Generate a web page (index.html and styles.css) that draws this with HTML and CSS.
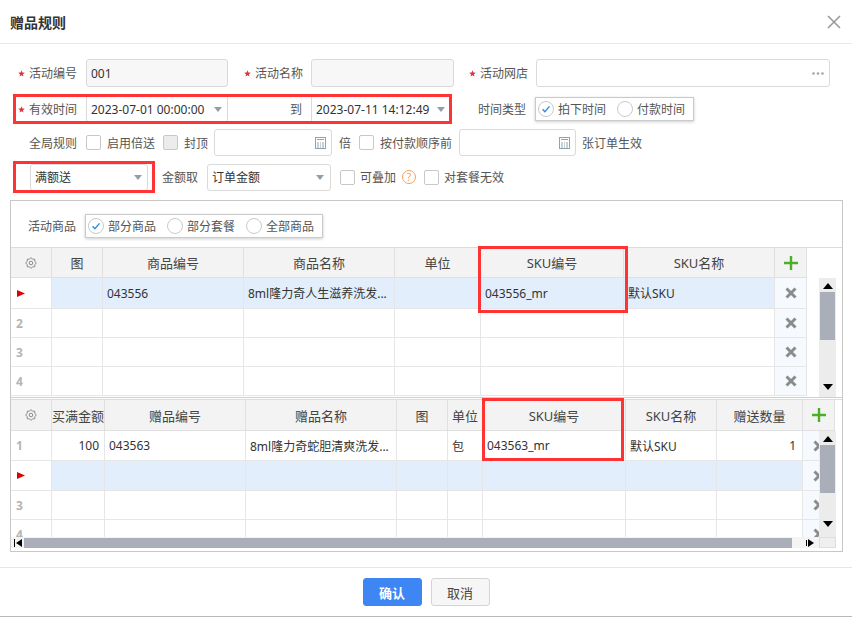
FILE: index.html
```html
<!DOCTYPE html>
<html>
<head>
  <meta charset="utf-8">
  <title>赠品规则</title>
  <link rel="stylesheet" href="styles.css">
</head>
<body>
  <div class="dialog">

    <!-- Header -->
    <div class="dlg-head">
      <span class="dlg-title">赠品规则</span>
      <svg class="dlg-close" width="14" height="14" viewBox="0 0 14 14"><path d="M1 1l12 12M13 1L1 13" stroke="#9a9a9a" stroke-width="1.6"/></svg>
    </div>

    <!-- Form -->
    <div class="form">
      <div class="row row1">
        <label class="lbl w86"><svg class="req" viewBox="0 0 10 10"><path d="M5 .3L6.23 3.6 9.76 3.75 7 5.950 7.94 9.35 5 7.4 2.06 9.35 3 5.95 .24 3.75 3.77 3.6z"/></svg>活动编号</label>
        <div class="ipt dis w142">001</div>
        <label class="lbl w83"><svg class="req" viewBox="0 0 10 10"><path d="M5 .3L6.23 3.6 9.76 3.75 7 5.95 7.94 9.35 5 7.4 2.06 9.35 3 5.95 .24 3.75 3.77 3.6z"/></svg>活动名称</label>
        <div class="ipt dis w143"></div>
        <label class="lbl w82"><svg class="req" viewBox="0 0 10 10"><path d="M5 .3L6.23 3.6 9.76 3.75 7 5.95 7.94 9.35 5 7.4 2.06 9.35 3 5.95 .24 3.75 3.77 3.6z"/></svg>活动网店</label>
        <div class="ipt w294 end">
          <svg width="12" height="3" viewBox="0 0 12 3"><circle cx="1.5" cy="1.5" r="1.3"/><circle cx="6" cy="1.5" r="1.3"/><circle cx="10.5" cy="1.5" r="1.3"/></svg>
        </div>
      </div>

      <div class="row row2">
        <div class="mark">
          <label class="lbl w72"><svg class="req" viewBox="0 0 10 10"><path d="M5 .3L6.23 3.6 9.76 3.75 7 5.95 7.94 9.35 5 7.4 2.06 9.35 3 5.95 .24 3.75 3.77 3.6z"/></svg>有效时间</label>
          <div class="ipt date w142">2023-07-01 00:00:00<span class="tri"></span></div>
          <label class="lbl w83 to">到</label>
          <div class="ipt date w140">2023-07-11 14:12:49<span class="tri"></span></div>
        </div>
        <label class="lbl w84">时间类型</label>
        <div class="radios">
          <span class="ritem"><svg class="radio" viewBox="0 0 16 16"><circle cx="8" cy="8" r="7.5" fill="#fff" stroke="#c9c9c9"/><path d="M4.6 8.3l2.3 2.5 4.6-5.4" fill="none" stroke="#2a8de8" stroke-width="1.4"/></svg>拍下时间</span>
          <span class="ritem"><svg class="radio" viewBox="0 0 16 16"><circle cx="8" cy="8" r="7.5" fill="#fff" stroke="#c9c9c9"/></svg>付款时间</span>
        </div>
      </div>

      <div class="row row3">
        <label class="lbl w86">全局规则</label>
        <span class="cb"></span>
        <span class="txt ml6">启用倍送</span>
        <span class="cb off ml8"></span>
        <span class="txt ml6">封顶</span>
        <div class="ipt w118 ml6 end">
          <svg class="calc" width="11" height="12" viewBox="0 0 11 12"><rect x=".5" y=".5" width="10" height="11" fill="none"/><path d="M2 2.5h7M2 6h2M5 6h1M7 6h2M2 8h2M5 8h1M7 8h2M2 10h2M5 10h1M7 10h2"/></svg>
        </div>
        <span class="txt ml7">倍</span>
        <span class="cb ml8"></span>
        <span class="txt ml6">按付款顺序前</span>
        <div class="ipt w117 ml7 end">
          <svg class="calc" width="11" height="12" viewBox="0 0 11 12"><rect x=".5" y=".5" width="10" height="11" fill="none"/><path d="M2 2.5h7M2 6h2M5 6h1M7 6h2M2 8h2M5 8h1M7 8h2M2 10h2M5 10h1M7 10h2"/></svg>
        </div>
        <span class="txt ml6">张订单生效</span>
      </div>

      <div class="row row4">
        <div class="mark">
          <div class="ipt sel-box w118">满额送<span class="tri"></span></div>
        </div>
        <span class="txt ml8">金额取</span>
        <div class="ipt sel-box w124 ml9">订单金额<span class="tri"></span></div>
        <span class="cb ml9"></span>
        <span class="txt ml5">可叠加</span>
        <span class="help ml6">?</span>
        <span class="cb ml8"></span>
        <span class="txt ml5">对套餐无效</span>
      </div>
    </div>

    <!-- Goods panel -->
    <div class="panel">
      <div class="goods-bar">
        <span class="txt">活动商品</span>
        <div class="radios ml9">
          <span class="ritem"><svg class="radio" viewBox="0 0 16 16"><circle cx="8" cy="8" r="7.5" fill="#fff" stroke="#c9c9c9"/><path d="M4.6 8.3l2.3 2.5 4.6-5.4" fill="none" stroke="#2a8de8" stroke-width="1.4"/></svg>部分商品</span>
          <span class="ritem"><svg class="radio" viewBox="0 0 16 16"><circle cx="8" cy="8" r="7.5" fill="#fff" stroke="#c9c9c9"/></svg>部分套餐</span>
          <span class="ritem"><svg class="radio" viewBox="0 0 16 16"><circle cx="8" cy="8" r="7.5" fill="#fff" stroke="#c9c9c9"/></svg>全部商品</span>
        </div>
      </div>

      <!-- Grid 1 -->
      <div class="grid1">
        <table class="tbl t1">
          <colgroup><col><col><col><col><col><col><col><col></colgroup>
          <thead>
            <tr>
              <th><svg class="gear" width="12" height="12" viewBox="0 0 12 12"><path d="M11.3 6L9.88 7.61 9.75 9.75 7.61 9.88 6 11.3 4.39 9.88 2.25 9.75 2.12 7.61.7 6 2.12 4.39 2.25 2.25 4.39 2.12 6 .7 7.61 2.12 9.75 2.25 9.88 4.39z"/><circle cx="6" cy="6" r="1.8"/></svg></th>
              <th>图</th>
              <th>商品编号</th>
              <th>商品名称</th>
              <th>单位</th>
              <th>SKU编号</th>
              <th>SKU名称</th>
              <th class="op"><svg width="14" height="14" viewBox="0 0 14 14"><path d="M7 0v14M0 7h14" stroke="#4caf2a" stroke-width="2.4"/></svg></th>
            </tr>
          </thead>
          <tbody>
            <tr class="sel tall">
              <td class="no"><svg class="flag" width="8" height="7" viewBox="0 0 8 7"><polygon points="0,0 8,3.5 0,7"/></svg></td>
              <td></td>
              <td>043556</td>
              <td>8ml隆力奇人生滋养洗发...</td>
              <td></td>
              <td>043556_mr</td>
              <td>默认SKU</td>
              <td class="op"><svg class="del" width="12" height="12" viewBox="0 0 12 12"><path d="M1.5 1.5l9 9M10.5 1.5l-9 9"/></svg></td>
            </tr>
            <tr>
              <td class="no">2</td><td></td><td></td><td></td><td></td><td></td><td></td>
              <td class="op"><svg class="del" width="12" height="12" viewBox="0 0 12 12"><path d="M1.5 1.5l9 9M10.5 1.5l-9 9"/></svg></td>
            </tr>
            <tr>
              <td class="no">3</td><td></td><td></td><td></td><td></td><td></td><td></td>
              <td class="op"><svg class="del" width="12" height="12" viewBox="0 0 12 12"><path d="M1.5 1.5l9 9M10.5 1.5l-9 9"/></svg></td>
            </tr>
            <tr>
              <td class="no">4</td><td></td><td></td><td></td><td></td><td></td><td></td>
              <td class="op"><svg class="del" width="12" height="12" viewBox="0 0 12 12"><path d="M1.5 1.5l9 9M10.5 1.5l-9 9"/></svg></td>
            </tr>
          </tbody>
        </table>
        <div class="vscroll v1">
          <span class="arr-up"></span>
          <span class="thumb"></span>
          <span class="arr-down"></span>
        </div>
      </div>

      <!-- Grid 2 -->
      <div class="grid2">
        <div class="view">
          <table class="tbl t2">
            <colgroup><col><col><col><col><col><col><col><col><col><col></colgroup>
            <thead>
              <tr>
                <th><svg class="gear" width="12" height="12" viewBox="0 0 12 12"><path d="M11.3 6L9.88 7.61 9.75 9.75 7.61 9.88 6 11.3 4.39 9.88 2.25 9.75 2.12 7.61.7 6 2.12 4.39 2.25 2.25 4.39 2.12 6 .7 7.61 2.12 9.75 2.25 9.88 4.39z"/><circle cx="6" cy="6" r="1.8"/></svg></th>
                <th>买满金额</th>
                <th>赠品编号</th>
                <th>赠品名称</th>
                <th>图</th>
                <th>单位</th>
                <th>SKU编号</th>
                <th>SKU名称</th>
                <th>赠送数量</th>
                <th class="op"><svg width="14" height="14" viewBox="0 0 14 14"><path d="M7 0v14M0 7h14" stroke="#4caf2a" stroke-width="2.4"/></svg></th>
              </tr>
            </thead>
            <tbody>
              <tr>
                <td class="no">1</td>
                <td class="num">100</td>
                <td>043563</td>
                <td>8ml隆力奇蛇胆清爽洗发...</td>
                <td></td>
                <td>包</td>
                <td>043563_mr</td>
                <td>默认SKU</td>
                <td class="num qty">1</td>
                <td class="op"><svg class="del" width="12" height="12" viewBox="0 0 12 12"><path d="M1.5 1.5l9 9M10.5 1.5l-9 9"/></svg></td>
              </tr>
              <tr class="sel">
                <td class="no"><svg class="flag" width="8" height="7" viewBox="0 0 8 7"><polygon points="0,0 8,3.5 0,7"/></svg></td>
                <td></td><td></td><td></td><td></td><td></td><td></td><td></td><td></td>
                <td class="op"><svg class="del" width="12" height="12" viewBox="0 0 12 12"><path d="M1.5 1.5l9 9M10.5 1.5l-9 9"/></svg></td>
              </tr>
              <tr class="short">
                <td class="no">3</td><td></td><td></td><td></td><td></td><td></td><td></td><td></td><td></td>
                <td class="op"><svg class="del" width="12" height="12" viewBox="0 0 12 12"><path d="M1.5 1.5l9 9M10.5 1.5l-9 9"/></svg></td>
              </tr>
              <tr class="short">
                <td class="no">4</td><td></td><td></td><td></td><td></td><td></td><td></td><td></td><td></td>
                <td class="op"><svg class="del" width="12" height="12" viewBox="0 0 12 12"><path d="M1.5 1.5l9 9M10.5 1.5l-9 9"/></svg></td>
              </tr>
            </tbody>
          </table>
          <div class="vscroll v2">
            <span class="arr-up"></span>
            <span class="thumb"></span>
            <span class="arr-down"></span>
          </div>
        </div>
        <div class="hscroll">
          <div class="htrack">
            <svg class="harr" width="9" height="8" viewBox="0 0 9 8"><path d="M.5 0v8" stroke="#000"/><polygon points="8,0 8,8 2,4"/></svg>
            <span class="hthumb"></span>
            <svg class="harr right" width="9" height="8" viewBox="0 0 9 8"><path d="M.5 1v6" stroke="#000"/><polygon points="2,0 8,4 2,8"/></svg>
          </div>
          <div class="hcorner"></div>
        </div>
      </div>

      <!-- annotation boxes -->
      <div class="anno a1"></div>
      <div class="anno a2"></div>
    </div>

    <!-- Footer -->
    <div class="foot">
      <button class="btn primary">确认</button>
      <button class="btn">取消</button>
    </div>
  </div>
</body>
</html>
```

FILE: styles.css
```css
* {
  box-sizing: border-box;
}

body {
  margin: 0;
  font-family: "Noto Sans", "Noto Sans CJK SC", sans-serif;
  font-size: 12px;
  color: #333;
  background: #fff;
}

.dialog {
  width: 852px;
  height: 617px;
  border-bottom: 1px solid #b8b8b8;
}

/* header */
.dlg-head {
  height: 44px;
  border-bottom: 1px solid #e9e9e9;
  display: flex;
  align-items: center;
  justify-content: space-between;
  padding: 0 11px 0 10px;
}

.dlg-title {
  font-size: 14px;
  font-weight: bold;
  color: #333;
}

/* form rows */
.form {
  padding-top: 15px;
}

.row {
  display: flex;
  align-items: center;
  height: 28px;
}

.row2 { margin-top: 8px; }
.row3 { margin-top: 6px; height: 27px; }
.row4 { margin-top: 6px; height: 30px; }

.lbl {
  flex: none;
  display: flex;
  align-items: center;
  justify-content: flex-end;
  padding-right: 9px;
  color: #555;
  white-space: nowrap;
}

.lbl.to { padding-right: 9px; }

.req {
  width: 7px;
  height: 7px;
  margin-right: 4px;
  fill: #d8353d;
}

.w72 { width: 72px; }
.w82 { width: 82px; padding-right: 8px; }
.w83 { width: 83px; padding-right: 8px; }
.w84 { width: 84px; }
.w86 { width: 86px; }
.w117 { width: 117px; }
.w118 { width: 118px; }
.w124 { width: 124px; }
.w140 { width: 140px; }
.w142 { width: 142px; }
.w143 { width: 143px; }
.w294 { width: 294px; }

.ml5 { margin-left: 5px; }
.ml6 { margin-left: 6px; }
.ml7 { margin-left: 7px; }
.ml8 { margin-left: 8px; }
.ml9 { margin-left: 9px; }

.ipt {
  flex: none;
  height: 28px;
  border: 1px solid #dadada;
  border-radius: 3px;
  display: flex;
  align-items: center;
  justify-content: space-between;
  padding: 0 5px 0 4px;
  background: #fff;
  color: #333;
  white-space: nowrap;
}

.ipt.dis {
  background: #f7f7f7;
}

.ipt.end {
  justify-content: flex-end;
  fill: #9ba6ae;
}

.row3 .ipt {
  height: 27px;
}

.ipt.sel-box {
  height: 27px;
}

.ipt.w124 {
  padding-right: 6px;
}

.tri {
  width: 0;
  height: 0;
  border-left: 4.5px solid transparent;
  border-right: 4.5px solid transparent;
  border-top: 5px solid #8fa0ab;
}

.calc {
  stroke: #8fa4b0;
}

.txt {
  flex: none;
  color: #555;
  white-space: nowrap;
}

.cb {
  flex: none;
  width: 15px;
  height: 15px;
  border: 1px solid #c8c8c8;
  border-radius: 2px;
  background: #fff;
}

.cb.off {
  background: #ececec;
}

.help {
  flex: none;
  width: 14px;
  height: 14px;
  border: 1px solid #f4a05a;
  border-radius: 50%;
  color: #f4a05a;
  font-size: 10px;
  line-height: 12px;
  text-align: center;
}

/* red annotation frames */
.mark {
  flex: none;
  display: flex;
  align-items: center;
  margin-left: 14px;
  outline: 3px solid #f33;
  outline-offset: -2px;
}

.row2 .mark { height: 28px; }
.row4 .mark { height: 30px; padding: 0 6px 0 16px; }

/* radio groups */
.radios {
  flex: none;
  display: flex;
  align-items: center;
  height: 24px;
  border: 1px solid #cacaca;
  background: #fff;
  box-shadow: 0 1px 3px rgba(0,0,0,0.2);
  padding: 0 8px 0 2px;
  color: #555;
}

.ritem {
  display: flex;
  align-items: center;
  white-space: nowrap;
}

.ritem + .ritem {
  margin-left: 11px;
}

.radio {
  width: 16px;
  height: 16px;
  margin-right: 4px;
}

/* panel */
.panel {
  position: relative;
  margin: 8px 9px 0 10px;
  height: 352px;
  border: 1px solid #c8c8c8;
}

.goods-bar {
  display: flex;
  align-items: center;
  height: 46px;
  padding: 13px 0 9px 17px;
}

.grid1 {
  display: flex;
  align-items: flex-start;
  height: 151px;
  border-top: 1px solid #dcdcdc;
  border-bottom: 1px solid #cfcfcf;
  overflow: hidden;
}

.tbl {
  flex: none;
  border-collapse: separate;
  border-spacing: 0;
  table-layout: fixed;
}

.t1 { width: 796px; }
.t2 { width: 824px; }

.t1 col:nth-child(1) { width: 41px; }
.t1 col:nth-child(2) { width: 51px; }
.t1 col:nth-child(3) { width: 141px; }
.t1 col:nth-child(4) { width: 151px; }
.t1 col:nth-child(5) { width: 86px; }
.t1 col:nth-child(6) { width: 143px; }
.t1 col:nth-child(7) { width: 151px; }
.t1 col:nth-child(8) { width: 32px; }

.t2 col:nth-child(1) { width: 41px; }
.t2 col:nth-child(2) { width: 53px; }
.t2 col:nth-child(3) { width: 141px; }
.t2 col:nth-child(4) { width: 151px; }
.t2 col:nth-child(5) { width: 51px; }
.t2 col:nth-child(6) { width: 35px; }
.t2 col:nth-child(7) { width: 143px; }
.t2 col:nth-child(8) { width: 91px; }
.t2 col:nth-child(9) { width: 86px; }
.t2 col:nth-child(10) { width: 32px; }

.tbl th {
  background: #f3f3f3;
  font-weight: normal;
  font-size: 13px;
  color: #444;
  border-right: 1px solid #e0e0e0;
  border-bottom: 1px solid #e0e0e0;
  padding: 0;
  white-space: nowrap;
  overflow: hidden;
  text-align: center;
}

.tbl td {
  border-right: 1px solid #e6e6e6;
  border-bottom: 1px solid #e6e6e6;
  padding: 0 4px;
  white-space: nowrap;
  overflow: hidden;
  color: #333;
}

.t1 thead tr { height: 30px; }
.t1 tbody tr { height: 29px; }
.t1 tbody tr.tall { height: 31px; }

.t2 thead tr { height: 31px; }
.t2 tbody tr { height: 30px; }
.t2 tbody tr.short { height: 29px; }

.tbl th svg,
.tbl td svg {
  display: block;
  margin: 0 auto;
}

.gear {
  fill: none;
  stroke: #8a8a8a;
  stroke-linejoin: round;
}

.tbl td.no {
  padding-left: 5px;
  color: #b5b5b5;
  font-weight: bold;
  background: #fff;
}

.tbl td.no svg {
  margin: 0 0 0 1px;
}

.flag {
  fill: #e00000;
}

.tbl td.num {
  text-align: right;
  padding-right: 5px;
}

.tbl td.qty {
  padding-right: 6px;
}

.tbl tr.sel td {
  background: #e2eefc;
}

.tbl tr.sel td.no {
  background: #fff;
}

.tbl td.op,
.tbl tr.sel td.op {
  background: #f6f9fd;
  padding: 0;
}

.del {
  stroke: #8c8c8c;
  stroke-width: 3;
}

/* scrollbars */
.vscroll {
  flex: none;
  width: 17px;
  background: #ececec;
  display: flex;
  flex-direction: column;
  align-items: center;
}

.v1 {
  margin: 30px 0 0 12px;
  height: 119px;
}

.arr-up,
.arr-down {
  width: 0;
  height: 0;
  border-left: 5.5px solid transparent;
  border-right: 5.5px solid transparent;
}

.arr-up {
  border-bottom: 6px solid #000;
  margin-top: 5px;
}

.arr-down {
  border-top: 6px solid #000;
  margin-top: auto;
  margin-bottom: 7px;
}

.thumb {
  width: 15px;
  height: 48px;
  margin-top: 3px;
  background: #a9aeb9;
}

.grid2 {
  margin-top: 1px;
}

.view {
  position: relative;
  height: 138px;
  overflow: hidden;
  border-top: 1px solid #dcdcdc;
}

.v2 {
  position: absolute;
  left: 808px;
  top: 31px;
  bottom: 0;
}

.v2 .arr-down {
  margin-bottom: 10px;
}

.hscroll {
  display: flex;
  height: 11px;
}

.htrack {
  width: 808px;
  display: flex;
  align-items: center;
  background: #f4f4f4;
}

.harr {
  flex: none;
  margin-left: 3px;
}

.harr.right {
  margin-left: auto;
  margin-right: 4px;
}

.hthumb {
  width: 768px;
  height: 10px;
  margin-left: 1px;
  background: #a9aeb9;
}

.hcorner {
  width: 17px;
  background: #efefef;
  border: 1px solid #dedede;
}

/* annotations over the grids */
.anno {
  position: absolute;
  border: 3px solid #f33;
}

.a1 {
  left: 467px;
  top: 45px;
  width: 150px;
  height: 67px;
}

.a2 {
  left: 471px;
  top: 197px;
  width: 142px;
  height: 63px;
}

/* footer */
.foot {
  margin-top: 15px;
  border-top: 1px solid #e6e6e6;
  display: flex;
  justify-content: center;
  gap: 9px;
  padding-top: 10px;
}

.btn {
  width: 59px;
  height: 28px;
  border: 1px solid #d4d4d4;
  border-radius: 3px;
  background: #f6f6f6;
  color: #444;
  font-family: "Noto Sans", "Noto Sans CJK SC", sans-serif;
  font-size: 13px;
  cursor: pointer;
}

.btn.primary {
  background: #3d86f4;
  border-color: #3d86f4;
  color: #fff;
  font-weight: bold;
}
```
